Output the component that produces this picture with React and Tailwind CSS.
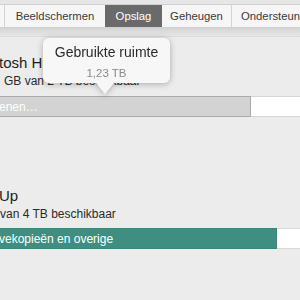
export default function App() {
  return (
    <div className="relative w-[300px] h-[300px] overflow-hidden bg-[#ececec] font-['Liberation_Sans',Arial,sans-serif]">
      <div className="h-[4px] bg-[#e6e6e6]" />
      <div className="flex h-[24px] bg-[#f6f6f6] border-y border-[#d0d0d0] text-[11.3px] text-[#3a3a3a] whitespace-nowrap overflow-hidden">
        <div className="w-[5px] shrink-0 border-r border-[#d3d3d3]" />
        <div className="w-[100px] shrink-0 flex items-center justify-center">Beeldschermen</div>
        <div className="w-[57px] shrink-0 flex items-center justify-center bg-[#6a6a6a] text-white">Opslag</div>
        <div className="w-[70px] shrink-0 flex items-center justify-center border-r border-[#d3d3d3]">Geheugen</div>
        <div className="flex-1 min-w-0 flex items-center pl-[9px]">Ondersteuning</div>
      </div>
      <div className="h-[9px] bg-gradient-to-b from-[#d4d4d4] to-[#e6e6e6] border-b border-[#dcdcdc]" />

      <div className="pt-[17px] text-[#1e1e1e] whitespace-nowrap">
        <div className="text-[15px] leading-[18px] -ml-[1px]">tosh HD</div>
        <div className="mt-[1px] text-[12px] leading-[16px] pl-[4px] text-[#2a2a2a]">GB van 2 TB beschikbaar</div>
        <div className="mt-[7px] flex h-[21px]">
          <div className="w-[251px] shrink-0 bg-[#d3d3d3] border-y border-r border-[#aaaaaa] flex items-center text-white text-[12px]">
            <span className="-ml-[1px]">enen…</span>
          </div>
          <div className="flex-1 bg-white border-y border-[#d6d6d6]" />
        </div>

        <div className="mt-[70px] text-[15px] leading-[18px] -ml-[1px]">Up</div>
        <div className="mt-[1px] text-[12px] leading-[16px] text-[#2a2a2a]">van 4 TB beschikbaar</div>
        <div className="mt-[6px] flex h-[21px]">
          <div className="w-[277px] shrink-0 bg-[#3e8f81] border-y border-r border-[#3a8678] flex items-center text-white text-[12px]">
            <span className="-ml-[1px]">vekopieën en overige</span>
          </div>
          <div className="flex-1 bg-white border-y border-[#d8d8d8]" />
        </div>
      </div>

      <div className="absolute left-[43px] top-[38px] drop-shadow-[0_1px_3px_rgba(0,0,0,0.28)]">
        <div className="relative w-[127px] h-[45px] rounded-[6px] bg-[#f7f7f7] flex flex-col items-center pt-[6px] whitespace-nowrap">
          <div className="text-[14px] leading-[16px] text-[#2b2b2b]">Gebruikte ruimte</div>
          <div className="mt-[6px] text-[11.5px] leading-[14px] text-[#8a8a8a]">1,23 TB</div>
          <svg className="absolute left-[52px] top-[44px]" width="20" height="12" viewBox="0 0 20 12">
            <path d="M0 0 L10 12 L20 0 Z" fill="#f7f7f7" />
          </svg>
        </div>
      </div>
    </div>
  );
}
